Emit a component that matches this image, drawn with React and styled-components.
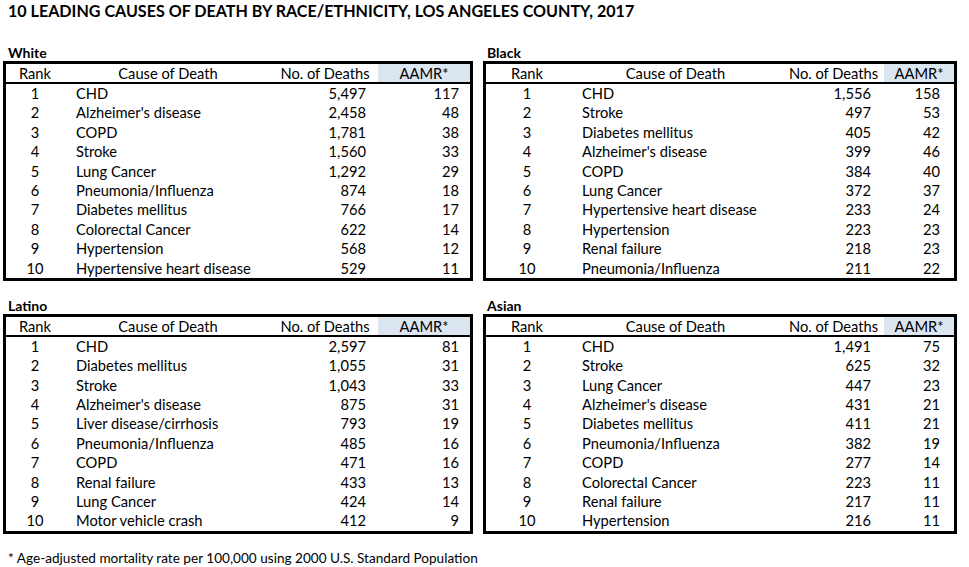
import React from 'react';
import styled, { createGlobalStyle } from 'styled-components';

const GlobalStyle = createGlobalStyle`
    html, body {
        margin: 0;
        padding: 0;
        background: #ffffff;
    }
    body {
        font-family: Lato, "Open Sans", "Liberation Sans", sans-serif;
        color: #000;
    }
`

const Page = styled.div`
    width: 969px;
    height: 567px;
    padding: 2px 0 0 3px;
    box-sizing: border-box;
`

const Title = styled.h1`
    margin: 0 0 0 5px;
    font-size: 16.1px;
    font-weight: 700;
    line-height: 18px;
    height: 18px;
    white-space: nowrap;
`

const Grid = styled.div`
    display: grid;
    grid-template-columns: 470px 474px;
    column-gap: 10px;
    row-gap: 16px;
    margin-top: 24px;
`

const Block = styled.section`
    display: flex;
    flex-direction: column;
`

const Label = styled.div`
    font-size: 14px;
    font-weight: 700;
    line-height: 17px;
    height: 17px;
    padding-left: ${p => p.$indent}px;
`

const Box = styled.div`
    border: 3px solid #000;
`

const Row = styled.div`
    display: grid;
    grid-template-columns: ${p => p.$cols};
    height: ${p => (p.$head ? 18 : 19.4)}px;
    line-height: 18px;
    font-size: 14.7px;
    border-bottom: ${p => (p.$head ? '2px solid #000' : 'none')};
    white-space: nowrap;
`

const Cell = styled.div`
    text-align: ${p => p.$align || 'left'};
    padding-left: ${p => p.$pl || 0}px;
    padding-right: ${p => p.$pr || 0}px;
    background: ${p => (p.$shade ? '#dce6f1' : 'transparent')};
    overflow: hidden;
`

const Footnote = styled.p`
    margin: 16px 0 0 5px;
    font-size: 13.6px;
    line-height: 16px;
    white-space: nowrap;
`

const wideCols = {
    cols: '58px 208px 106px 92px',
    causePad: 12,
    deathPad: 12,
    rate: 11,
    indent: 5,
}

const narrowCols = {
    cols: '82px 215px 101px 70px',
    causePad: 14,
    deathPad: 13,
    rate: 14,
    indent: 4,
}

const tables = [
    {
        name: 'White', layout: wideCols, rows: [
            ['CHD', '5,497', '117'],
            ["Alzheimer's disease", '2,458', '48'],
            ['COPD', '1,781', '38'],
            ['Stroke', '1,560', '33'],
            ['Lung Cancer', '1,292', '29'],
            ['Pneumonia/Influenza', '874', '18'],
            ['Diabetes mellitus', '766', '17'],
            ['Colorectal Cancer', '622', '14'],
            ['Hypertension', '568', '12'],
            ['Hypertensive heart disease', '529', '11'],
        ]
    },
    {
        name: 'Black', layout: narrowCols, rows: [
            ['CHD', '1,556', '158'],
            ['Stroke', '497', '53'],
            ['Diabetes mellitus', '405', '42'],
            ["Alzheimer's disease", '399', '46'],
            ['COPD', '384', '40'],
            ['Lung Cancer', '372', '37'],
            ['Hypertensive heart disease', '233', '24'],
            ['Hypertension', '223', '23'],
            ['Renal failure', '218', '23'],
            ['Pneumonia/Influenza', '211', '22'],
        ]
    },
    {
        name: 'Latino', layout: wideCols, rows: [
            ['CHD', '2,597', '81'],
            ['Diabetes mellitus', '1,055', '31'],
            ['Stroke', '1,043', '33'],
            ["Alzheimer's disease", '875', '31'],
            ['Liver disease/cirrhosis', '793', '19'],
            ['Pneumonia/Influenza', '485', '16'],
            ['COPD', '471', '16'],
            ['Renal failure', '433', '13'],
            ['Lung Cancer', '424', '14'],
            ['Motor vehicle crash', '412', '9'],
        ]
    },
    {
        name: 'Asian', layout: narrowCols, rows: [
            ['CHD', '1,491', '75'],
            ['Stroke', '625', '32'],
            ['Lung Cancer', '447', '23'],
            ["Alzheimer's disease", '431', '21'],
            ['Diabetes mellitus', '411', '21'],
            ['Pneumonia/Influenza', '382', '19'],
            ['COPD', '277', '14'],
            ['Colorectal Cancer', '223', '11'],
            ['Renal failure', '217', '11'],
            ['Hypertension', '216', '11'],
        ]
    },
];

function CauseTable({ name, layout, rows }) {
    return (
        <Block>
            <Label $indent={layout.indent}>{name}</Label>
            <Box>
                <Row $head $cols={layout.cols}>
                    <Cell $align="center">Rank</Cell>
                    <Cell $align="center">Cause of Death</Cell>
                    <Cell $align="center">No. of Deaths</Cell>
                    <Cell $align="center" $shade>AAMR*</Cell>
                </Row>
                {rows.map(([cause, deaths, rate], i) => (
                    <Row key={cause} $cols={layout.cols}>
                        <Cell $align="center">{i + 1}</Cell>
                        <Cell $pl={layout.causePad}>{cause}</Cell>
                        <Cell $align="right" $pr={layout.deathPad}>{deaths}</Cell>
                        <Cell $align="right" $pr={layout.rate}>{rate}</Cell>
                    </Row>
                ))}
            </Box>
        </Block>
    )
}

export default function App() {
    return (
        <Page>
            <GlobalStyle />
            <Title>10 LEADING CAUSES OF DEATH BY RACE/ETHNICITY, LOS ANGELES COUNTY, 2017</Title>
            <Grid>
                {tables.map(t => <CauseTable key={t.name} {...t} />)}
            </Grid>
            <Footnote>* Age-adjusted mortality rate per 100,000 using 2000 U.S. Standard Population</Footnote>
        </Page>
    )
}
